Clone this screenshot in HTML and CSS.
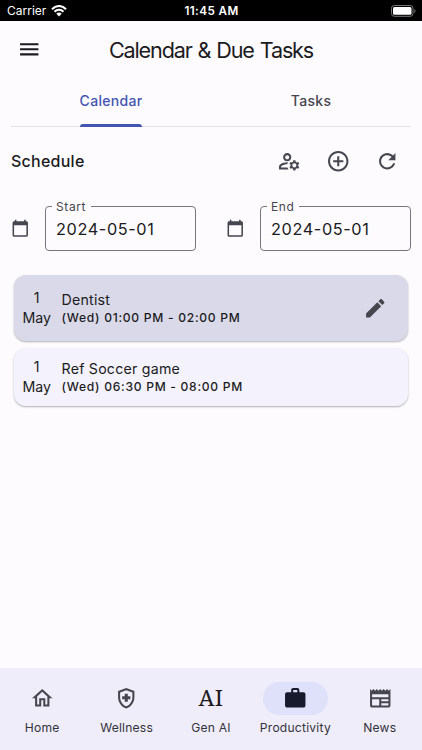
FILE: index.html
```html
<!DOCTYPE html>
<html lang="en">
<head>
<meta charset="utf-8">
<title>Calendar &amp; Due Tasks</title>
<link rel="stylesheet" href="styles.css">
</head>
<body>
<div class="app">
  <div class="status">
    <div class="carrier"><span>Carrier</span>
      <svg class="wifi" viewBox="0 0 16 12"><path d="M1 4.2C5-.1 11-.1 15 4.2M3.5 6.8c2.600-2.700 6.400-2.700 9 0" fill="none" stroke="#fff" stroke-width="2"/><path d="M5.300 8.700c1.600-1.600 3.800-1.600 5.400 0L8 11.600z" fill="#fff"/></svg>
    </div>
    <div class="clock">11:45 AM</div>
    <svg class="battery" viewBox="0 0 25 12"><rect x=".5" y=".5" width="21.500" height="10.800" rx="2.800" fill="none" stroke="#777"/><rect x="2" y="2" width="18.500" height="7.800" rx="1.500" fill="#fff"/><path d="M23.300 4v4q1.200-.6 1.200-2t-1.200-2z" fill="#777"/></svg>
  </div>
  <header class="appbar">
    <svg class="icon menu" viewBox="0 0 24 24"><path d="M3 18h18v-2H3v2zm0-5h18v-2H3v2zm0-7v2h18V6H3z"/></svg>
    <h1><span>Calendar &amp; Due Tasks</span></h1>
  </header>
  <nav class="tabs">
    <div class="tab active"><span>Calendar</span></div>
    <div class="tab"><span>Tasks</span></div>
  </nav>
  <div class="schedule">
    <h2><span>Schedule</span></h2>
    <svg class="icon" viewBox="0 0 24 24"><path fill-rule="evenodd" d="M4,18v-0.65c0-0.34,0.16-0.66,0.41-0.81C6.1,15.53,8.03,15,10,15c0.03,0,0.05,0,0.08,0.01c0.1-0.7,0.3-1.37,0.59-1.98C10.45,13.01,10.23,13,10,13c-2.42,0-4.68,0.67-6.61,1.82C2.51,15.34,2,16.32,2,17.35V20h9.26c-0.42-0.6-0.75-1.28-0.97-2H4z M10,12c2.21,0,4-1.79,4-4s-1.79-4-4-4C7.79,4,6,5.79,6,8S7.79,12,10,12z M10,6c1.1,0,2,0.9,2,2s-0.9,2-2,2c-1.1,0-2-0.9-2-2S8.9,6,10,6z M20.75,16c0-0.22-0.03-0.42-0.06-0.63l1.14-1.01l-1-1.73l-1.45,0.49c-0.32-0.27-0.68-0.48-1.08-0.63L18,11h-2l-0.3,1.49c-0.4,0.15-0.76,0.36-1.08,0.63l-1.45-0.49l-1,1.73l1.14,1.01c-0.03,0.21-0.06,0.41-0.06,0.63s0.03,0.42,0.06,0.63l-1.14,1.01l1,1.73l1.45-0.49c0.32,0.27,0.68,0.48,1.08,0.63L16,21h2l0.3-1.49c0.4-0.15,0.76-0.36,1.08-0.63l1.45,0.49l1-1.73l-1.14-1.01C20.72,16.42,20.75,16.22,20.75,16z M17,18c-1.1,0-2-0.9-2-2s0.9-2,2-2s2,0.9,2,2S18.1,18,17,18z"/></svg>
    <svg class="icon" viewBox="0 0 24 24"><path d="M13 7h-2v4H7v2h4v4h2v-4h4v-2h-4V7zm-1-5C6.480 2 2 6.480 2 12s4.480 10 10 10 10-4.480 10-10S17.520 2 12 2zm0 18c-4.410 0-8-3.590-8-8s3.590-8 8-8 8 3.590 8 8-3.590 8-8 8z"/></svg>
    <svg class="icon" viewBox="0 0 24 24"><path d="M17.650 6.350C16.200 4.900 14.210 4 12 4c-4.420 0-7.990 3.580-7.990 8s3.570 8 7.990 8c3.730 0 6.840-2.550 7.730-6h-2.080c-.82 2.330-3.040 4-5.650 4-3.310 0-6-2.690-6-6s2.690-6 6-6c1.660 0 3.140.69 4.220 1.780L13 11h7V4l-2.350 2.350z"/></svg>
  </div>
  <div class="dates">
    <div class="date">
      <svg class="icon small" viewBox="0 0 24 24"><path d="M20 3h-1V1h-2v2H7V1H5v2H4c-1.100 0-2 .9-2 2v16c0 1.100.9 2 2 2h16c1.100 0 2-.9 2-2V5c0-1.100-.9-2-2-2zm0 18H4V8h16v13z"/></svg>
      <fieldset><legend>Start</legend><span>2024-05-01</span></fieldset>
    </div>
    <div class="date">
      <svg class="icon small" viewBox="0 0 24 24"><path d="M20 3h-1V1h-2v2H7V1H5v2H4c-1.100 0-2 .9-2 2v16c0 1.100.9 2 2 2h16c1.100 0 2-.9 2-2V5c0-1.100-.9-2-2-2zm0 18H4V8h16v13z"/></svg>
      <fieldset><legend>End</legend><span>2024-05-01</span></fieldset>
    </div>
  </div>
  <main class="events">
    <article class="event selected">
      <div class="day"><span>1</span><span>May</span></div>
      <div class="info"><span class="name">Dentist</span><span class="time">(Wed) 01:00 PM - 02:00 PM</span></div>
      <svg class="icon" viewBox="0 0 24 24"><path d="M3 17.250V21h3.750L17.810 9.940l-3.750-3.750L3 17.250zM20.710 7.040c.39-.39.39-1.020 0-1.410l-2.340-2.340c-.39-.39-1.020-.39-1.410 0l-1.830 1.830 3.750 3.750 1.830-1.830z"/></svg>
    </article>
    <article class="event">
      <div class="day"><span>1</span><span>May</span></div>
      <div class="info"><span class="name">Ref Soccer game</span><span class="time">(Wed) 06:30 PM - 08:00 PM</span></div>
    </article>
  </main>
  <nav class="bottom">
    <div class="item"><div class="pill"><svg class="icon" viewBox="0 0 24 24"><path d="M12 5.690l5 4.500V18h-2v-6H9v6H7v-7.810l5-4.500M12 3L2 12h3v8h6v-6h2v6h6v-8h3L12 3z"/></svg></div><span>Home</span></div>
    <div class="item"><div class="pill"><svg class="icon" viewBox="0 0 24 24"><path fill-rule="evenodd" d="M10.500,13H8v-3h2.500V7.500h3V10H16v3h-2.500v2.500h-3V13z M12,2L4,5v6.090c0,5.050,3.410,9.760,8,10.910c4.590-1.150,8-5.860,8-10.910V5L12,2z M18,11.090c0,4-2.550,7.700-6,8.830c-3.450-1.130-6-4.820-6-8.830V6.310l6-2.120l6,2.120V11.090z"/></svg></div><span>Wellness</span></div>
    <div class="item"><div class="pill"><b class="ai">AI</b></div><span>Gen AI</span></div>
    <div class="item current"><div class="pill"><svg class="icon" viewBox="0 0 24 24"><path d="M20 6h-4V4c0-1.110-.89-2-2-2h-4c-1.110 0-2 .89-2 2v2H4c-1.110 0-1.990.89-1.990 2L2 19c0 1.110.89 2 2 2h16c1.110 0 2-.89 2-2V8c0-1.110-.89-2-2-2zm-6 0h-4V4h4v2z"/></svg></div><span>Productivity</span></div>
    <div class="item"><div class="pill"><svg class="icon" viewBox="0 0 24 24"><path fill-rule="evenodd" d="M22,3l-1.670,1.670L18.670,3L17,4.670L15.330,3l-1.660,1.670L12,3l-1.670,1.670L8.670,3L7,4.670L5.330,3L3.670,4.670L2,3v16c0,1.100,0.900,2,2,2h16c1.100,0,2-0.900,2-2V3z M11,19H4v-6h7V19z M20,19h-7v-2h7V19z M20,15h-7v-2h7V15z M20,11H4V8h16V11z"/></svg></div><span>News</span></div>
  </nav>
</div>
</body>
</html>
```
FILE: styles.css
```css
* { box-sizing: border-box; }
body { margin: 0; font-family: Inter, "Liberation Sans", sans-serif; color: #1b1b21; }
.app { width: 422px; height: 750px; display: flex; flex-direction: column; background: #fefbff; overflow: hidden; }
.icon { width: 24.5px; height: 24.5px; fill: #46464f; flex: none; display: block; }

.status { height: 21px; flex: none; background: #000; color: #fff; display: grid; grid-template-columns: 1fr auto 1fr; align-items: center; padding: 0 6px 0 7px; font-size: 12px; }
.carrier { display: flex; align-items: center; gap: 5px; letter-spacing: 0; }
.wifi { width: 16px; height: 12px; }
.clock { font-weight: 600; letter-spacing: 0.4px; font-size: 11.7px; }
.battery { width: 25px; height: 12px; justify-self: end; }

.appbar { height: 57px; flex: none; display: grid; grid-template-columns: 33px 1fr 33px; align-items: center; padding: 0 16.5px; }
.menu { fill: #1b1b21; }
h1 { margin: 0; text-align: center; font-weight: 400; font-size: 21.6px; line-height: 28px; letter-spacing: -1.15px; word-spacing: 1px; }

.tabs { height: 49px; flex: none; display: flex; margin: 0 11px; border-bottom: 1.5px solid #e4e1ec; }
.tab { flex: 1; display: flex; justify-content: center; font-size: 14px; font-weight: 450; letter-spacing: 0.3px; color: #46464f; line-height: 46px; }
.tab span { height: 49px; display: flex; flex-direction: column; }
.tab.active { color: #4355b0; }
.tab.active span::after { content: ""; height: 3px; flex: none; background: #4355b0; border-radius: 3px 3px 0 0; }

.schedule { height: 69px; flex: none; display: flex; align-items: center; gap: 24.5px; padding: 0 22.5px 1px 11px; }
h2 { margin: 0; flex: 1; font-size: 16px; font-weight: 500; letter-spacing: 0.25px; }

.dates { height: 73px; flex: none; display: flex; justify-content: space-between; padding: 3px 11px 0 10.5px; }
.date { display: flex; align-items: flex-start; gap: 16px; }
.small { width: 18.5px; height: 18.5px; margin-top: 20px; }
fieldset { width: 151px; height: 52px; margin: 0; padding: 0 0 0 10px; border: 1px solid #777680; border-radius: 4px; min-width: 0; }
legend { padding: 0 5px 0 4px; margin-left: -4px; height: 15px; line-height: 15px; font-size: 12px; letter-spacing: 0.6px; color: #46464f; }
fieldset span { display: block; line-height: 30px; font-size: 16.3px; letter-spacing: 0.6px; }

.events { flex: 1; display: flex; flex-direction: column; gap: 7px; padding: 6px 14px 0; }
.event { height: 58px; display: flex; align-items: center; padding: 0 21px 0 0; border-radius: 12px; background: #f4f2fc; box-shadow: 0 1px 2px rgba(0,0,0,.3); }
.event.selected { height: 66px; background: #dad9e9; }
.day { width: 45.5px; display: flex; flex-direction: column; align-items: center; font-size: 14.2px; line-height: 20px; letter-spacing: 0; }
.info { flex: 1; display: flex; flex-direction: column; padding-left: 2px; }
.info span { align-self: flex-start; white-space: nowrap; }
.name { font-size: 14.2px; line-height: 19px; letter-spacing: 0.22px; }
.time { font-size: 12.1px; line-height: 17px; font-weight: 450; letter-spacing: 0.72px; }

.bottom { height: 82px; flex: none; display: grid; grid-template-columns: repeat(5, 1fr); background: #efedf9; }
.item { display: flex; flex-direction: column; align-items: center; padding-top: 14px; font-size: 12.1px; line-height: 16px; letter-spacing: 0.22px; color: #32323a; white-space: nowrap; }
.pill { width: 65px; height: 32.5px; margin-bottom: 5px; border-radius: 17px; display: flex; align-items: center; justify-content: center; }
.current .pill { background: #dfe0f9; }
.current .icon { fill: #171a2c; }
.ai { font: 400 22.5px/32px "Noto Serif", "DejaVu Serif", "Liberation Serif", serif; letter-spacing: 0.3px; color: #1b1b21; }
```
